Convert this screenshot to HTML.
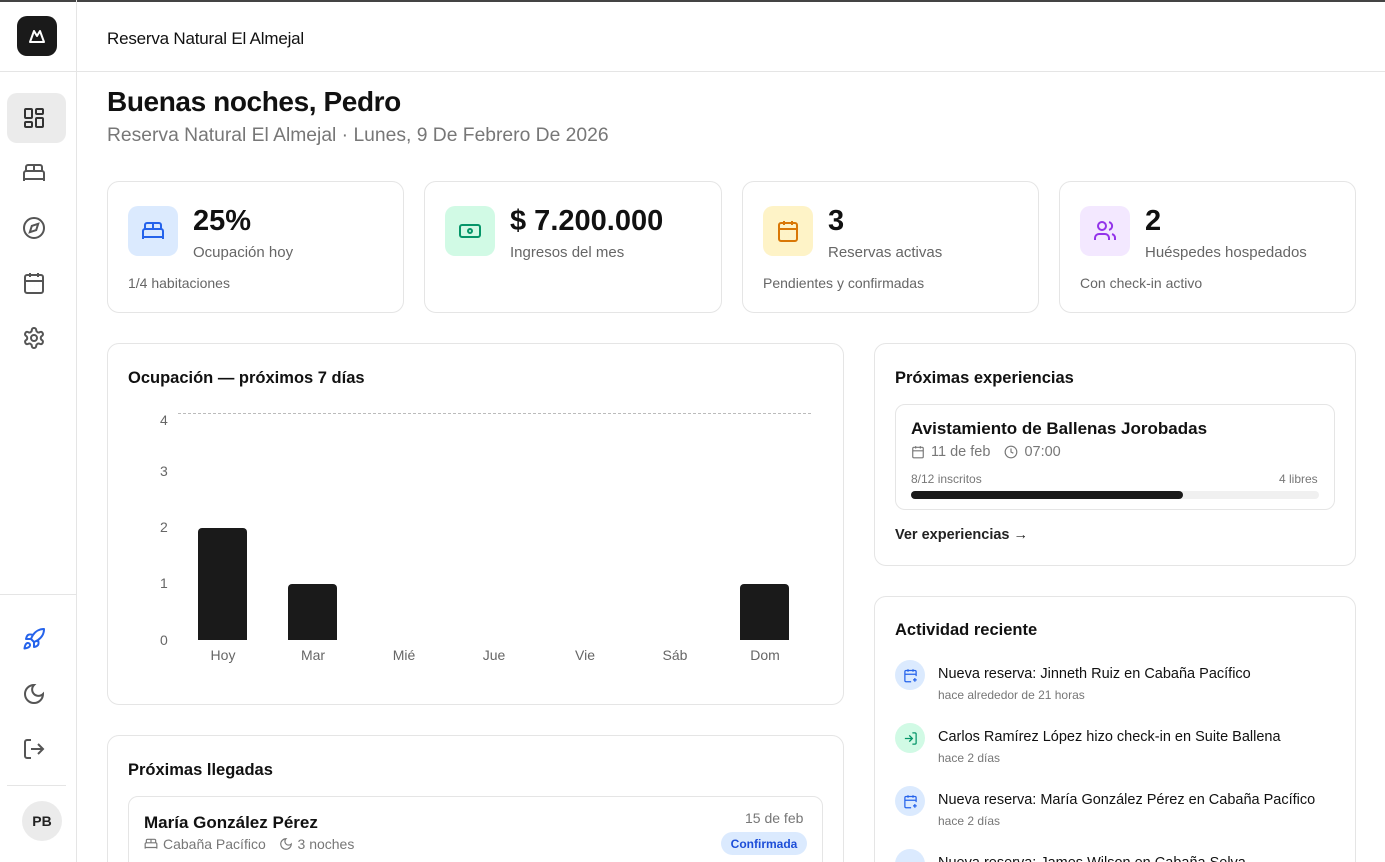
<!DOCTYPE html>
<html><head><meta charset="utf-8"><style>
*{box-sizing:border-box;margin:0;padding:0}
html,body{width:1385px;height:862px;overflow:hidden}
body{background:#fff;font-family:"Liberation Sans",sans-serif;color:#111;position:relative}
.a{position:absolute}
.card{position:absolute;border:1px solid #e5e5e5;border-radius:12px;background:#fff}
.ic{position:absolute;left:128px;top:206px;width:50px;height:50px;border-radius:10px;display:flex;align-items:center;justify-content:center}
.big{font-size:29px;font-weight:bold}
.lbl{font-size:15px;color:#666}
.sub{font-size:14px;color:#666}
svg{display:block}
.si{position:absolute;left:22px}
.bar{position:absolute;background:#1a1a1a;border-radius:4px 4px 0 0;width:49px}
.xl{position:absolute;top:647px;font-size:14px;color:#666;width:60px;text-align:center}
.yl{position:absolute;left:160px;font-size:14px;color:#666}
.act{position:absolute;left:895px;width:30px;height:30px;border-radius:50%;display:flex;align-items:center;justify-content:center}
.at{position:absolute;left:938px;font-size:14.5px;color:#111}
.ad{position:absolute;left:938px;font-size:12px;color:#777}
</style></head><body>
<div class="a" style="left:0;top:0;width:1385px;height:2px;background:#444"></div>
<div class="a" style="left:76px;top:0;width:1px;height:862px;background:#e5e5e5"></div>
<div class="a" style="left:0;top:71px;width:1385px;height:1px;background:#e5e5e5"></div>
<div class="a" style="left:17px;top:16px;width:40px;height:40px;border-radius:10px;background:#1a1a1a;display:flex;align-items:center;justify-content:center">
<svg width="20" height="20" viewBox="0 0 20 20" fill="none" stroke="#fff" stroke-width="2" stroke-linejoin="round"><path d="M3 16 L7 5 L10 10 L13 5 L17 16 Z"/></svg></div>
<div class="a" style="left:107px;top:29px;font-size:17px;font-weight:500;letter-spacing:-0.2px">Reserva Natural El Almejal</div>
<div class="a" style="left:7px;top:93px;width:59px;height:50px;border-radius:10px;background:#ebebeb"></div>
<svg class="si" style="top:106px" width="24" height="24" viewBox="0 0 24 24" fill="none" stroke="#333" stroke-width="2"><rect x="3" y="3" width="7" height="9" rx="1"/><rect x="14" y="3" width="7" height="5" rx="1"/><rect x="14" y="12" width="7" height="9" rx="1"/><rect x="3" y="16" width="7" height="5" rx="1"/></svg>
<svg class="si" style="top:161px" width="24" height="24" viewBox="0 0 24 24" fill="none" stroke="#555" stroke-width="2"><path d="M2 20v-8a2 2 0 0 1 2-2h16a2 2 0 0 1 2 2v8M4 10V6a2 2 0 0 1 2-2h12a2 2 0 0 1 2 2v4M12 4v6M2 18h20"/></svg>
<svg class="si" style="top:216px" width="24" height="24" viewBox="0 0 24 24" fill="none" stroke="#555" stroke-width="2"><circle cx="12" cy="12" r="10"/><path d="M16.2 7.8l-2 6.3-6.4 2.1 2-6.3z"/></svg>
<svg class="si" style="top:271px" width="24" height="24" viewBox="0 0 24 24" fill="none" stroke="#555" stroke-width="2"><rect x="3" y="4" width="18" height="18" rx="2"/><path d="M16 2v4M8 2v4M3 10h18M8 14h.01M12 14h.01M16 14h.01M8 18h.01M12 18h.01M16 18h.01"/></svg>
<svg class="si" style="top:326px" width="24" height="24" viewBox="0 0 24 24" fill="none" stroke="#555" stroke-width="2"><circle cx="12" cy="12" r="3"/><path d="M12.2 2h-.4a2 2 0 0 0-2 2v.2a2 2 0 0 1-1 1.7l-.4.3a2 2 0 0 1-2 0l-.2-.1a2 2 0 0 0-2.7.7l-.2.4a2 2 0 0 0 .7 2.7l.2.1a2 2 0 0 1 1 1.7v.5a2 2 0 0 1-1 1.8l-.2.1a2 2 0 0 0-.7 2.7l.2.4a2 2 0 0 0 2.7.7l.2-.1a2 2 0 0 1 2 0l.4.3a2 2 0 0 1 1 1.7V20a2 2 0 0 0 2 2h.4a2 2 0 0 0 2-2v-.2a2 2 0 0 1 1-1.7l.4-.3a2 2 0 0 1 2 0l.2.1a2 2 0 0 0 2.7-.7l.2-.4a2 2 0 0 0-.7-2.7l-.2-.1a2 2 0 0 1-1-1.8v-.5a2 2 0 0 1 1-1.7l.2-.1a2 2 0 0 0 .7-2.7l-.2-.4a2 2 0 0 0-2.7-.7l-.2.1a2 2 0 0 1-2 0l-.4-.3a2 2 0 0 1-1-1.7V4a2 2 0 0 0-2-2z"/></svg>
<div class="a" style="left:0;top:594px;width:76px;height:1px;background:#e5e5e5"></div>
<svg class="si" style="top:627px" width="24" height="24" viewBox="0 0 24 24" fill="none" stroke="#2563eb" stroke-width="2" stroke-linejoin="round"><path d="M4.5 16.5c-1.5 1.3-2 5-2 5s3.7-.5 5-2c.7-.8.7-2.1-.1-2.9a2.2 2.2 0 0 0-2.9-.1zM12 15l-3-3a22 22 0 0 1 2-4A12.9 12.9 0 0 1 22 2c0 2.7-.8 7.5-6 11a22.4 22.4 0 0 1-4 2zM9 12H4s.6-3 2-4c1.6-1.1 5 0 5 0M12 15v5s3-.6 4-2c1.1-1.6 0-5 0-5"/></svg>
<svg class="si" style="top:682px" width="24" height="24" viewBox="0 0 24 24" fill="none" stroke="#555" stroke-width="2"><path d="M12 3a6 6 0 0 0 9 9 9 9 0 1 1-9-9z"/></svg>
<svg class="si" style="top:737px" width="24" height="24" viewBox="0 0 24 24" fill="none" stroke="#555" stroke-width="2"><path d="M9 21H5a2 2 0 0 1-2-2V5a2 2 0 0 1 2-2h4M16 17l5-5-5-5M21 12H9"/></svg>
<div class="a" style="left:7px;top:785px;width:59px;height:1px;background:#e5e5e5"></div>
<div class="a" style="left:22px;top:801px;width:40px;height:40px;border-radius:50%;background:#ebebeb;font-size:14px;font-weight:bold;display:flex;align-items:center;justify-content:center;color:#222">PB</div>
<div class="a" style="left:107px;top:86px;font-size:28px;font-weight:bold;letter-spacing:-0.4px">Buenas noches, Pedro</div>
<div class="a" style="left:107px;top:125px;font-size:19.3px;color:#777">Reserva Natural El Almejal · Lunes, 9 De Febrero De 2026</div>
<div class="card" style="left:107px;top:181px;width:297px;height:132px"></div>
<div class="card" style="left:424px;top:181px;width:298px;height:132px"></div>
<div class="card" style="left:742px;top:181px;width:297px;height:132px"></div>
<div class="card" style="left:1059px;top:181px;width:297px;height:132px"></div>
<div class="ic" style="background:#dbeafe"><svg width="24" height="24" viewBox="0 0 24 24" fill="none" stroke="#2563eb" stroke-width="2"><path d="M2 20v-8a2 2 0 0 1 2-2h16a2 2 0 0 1 2 2v8M4 10V6a2 2 0 0 1 2-2h12a2 2 0 0 1 2 2v4M12 4v6M2 18h20"/></svg></div>
<div class="ic" style="left:445px;background:#d1fae5"><svg width="24" height="24" viewBox="0 0 24 24" fill="none" stroke="#059669" stroke-width="2"><rect x="2" y="6" width="20" height="12" rx="2"/><circle cx="12" cy="12" r="2"/><path d="M6 12h.01M18 12h.01"/></svg></div>
<div class="ic" style="left:763px;background:#fef3c7"><svg width="24" height="24" viewBox="0 0 24 24" fill="none" stroke="#d97706" stroke-width="2"><rect x="3" y="4" width="18" height="18" rx="2"/><path d="M16 2v4M8 2v4M3 10h18M8 14h.01M12 14h.01M16 14h.01M8 18h.01M12 18h.01M16 18h.01"/></svg></div>
<div class="ic" style="left:1080px;background:#f3e8ff"><svg width="24" height="24" viewBox="0 0 24 24" fill="none" stroke="#9333ea" stroke-width="2"><path d="M16 21v-2a4 4 0 0 0-4-4H6a4 4 0 0 0-4 4v2"/><circle cx="9" cy="7" r="4"/><path d="M22 21v-2a4 4 0 0 0-3-3.9M16 3.1a4 4 0 0 1 0 7.8"/></svg></div>
<div class="a big" style="left:193px;top:205px">25%</div><div class="a lbl" style="left:193px;top:244px">Ocupación hoy</div><div class="a sub" style="left:128px;top:275px">1/4 habitaciones</div>
<div class="a big" style="left:510px;top:205px">$ 7.200.000</div><div class="a lbl" style="left:510px;top:244px">Ingresos del mes</div>
<div class="a big" style="left:828px;top:205px">3</div><div class="a lbl" style="left:828px;top:244px">Reservas activas</div><div class="a sub" style="left:763px;top:275px">Pendientes y confirmadas</div>
<div class="a big" style="left:1145px;top:205px">2</div><div class="a lbl" style="left:1145px;top:244px">Huéspedes hospedados</div><div class="a sub" style="left:1080px;top:275px">Con check-in activo</div>
<div class="card" style="left:107px;top:343px;width:737px;height:362px"></div>
<div class="a" style="left:128px;top:369px;font-size:16.5px;font-weight:bold">Ocupación — próximos 7 días</div>
<div class="a" style="left:178px;top:413px;width:633px;border-top:1.5px dashed #bbb"></div>
<div class="yl" style="top:412px">4</div><div class="yl" style="top:463px">3</div><div class="yl" style="top:519px">2</div><div class="yl" style="top:575px">1</div><div class="yl" style="top:632px">0</div>
<div class="bar" style="left:198px;top:528px;height:112px"></div>
<div class="bar" style="left:288px;top:584px;height:56px"></div>
<div class="bar" style="left:740px;top:584px;height:56px"></div>
<div class="xl" style="left:193px">Hoy</div><div class="xl" style="left:283px">Mar</div><div class="xl" style="left:374px">Mié</div><div class="xl" style="left:464px">Jue</div><div class="xl" style="left:555px">Vie</div><div class="xl" style="left:645px">Sáb</div><div class="xl" style="left:735px">Dom</div>
<div class="card" style="left:107px;top:735px;width:737px;height:160px"></div>
<div class="a" style="left:128px;top:761px;font-size:16.5px;font-weight:bold">Próximas llegadas</div>
<div class="card" style="left:128px;top:796px;width:695px;height:100px;border-radius:10px"></div>
<div class="a" style="left:144px;top:813px;font-size:17px;font-weight:bold">María González Pérez</div>
<div class="a" style="left:144px;top:836px;font-size:14px;color:#777;display:flex;align-items:center;gap:5px"><svg width="14" height="14" viewBox="0 0 24 24" fill="none" stroke="#777" stroke-width="2"><path d="M2 20v-8a2 2 0 0 1 2-2h16a2 2 0 0 1 2 2v8M4 10V6a2 2 0 0 1 2-2h12a2 2 0 0 1 2 2v4M12 4v6M2 18h20"/></svg>Cabaña Pacífico&nbsp;&nbsp;<svg width="14" height="14" viewBox="0 0 24 24" fill="none" stroke="#777" stroke-width="2"><path d="M12 3a6 6 0 0 0 9 9 9 9 0 1 1-9-9z"/></svg>3 noches</div>
<div class="a" style="left:745px;top:810px;font-size:14px;color:#777">15 de feb</div>
<div class="a" style="left:721px;top:832px;width:86px;height:23px;border-radius:12px;background:#dbeafe;color:#1d4ed8;font-size:12px;font-weight:bold;display:flex;align-items:center;justify-content:center">Confirmada</div>
<div class="card" style="left:874px;top:343px;width:482px;height:223px"></div>
<div class="a" style="left:895px;top:369px;font-size:16.5px;font-weight:bold">Próximas experiencias</div>
<div class="card" style="left:895px;top:404px;width:440px;height:106px;border-radius:10px"></div>
<div class="a" style="left:911px;top:419px;font-size:17px;font-weight:bold">Avistamiento de Ballenas Jorobadas</div>
<div class="a" style="left:911px;top:444px;font-size:14.5px;color:#777;display:flex;align-items:center;gap:6px"><svg width="14" height="14" viewBox="0 0 24 24" fill="none" stroke="#777" stroke-width="2"><rect x="3" y="4" width="18" height="18" rx="2"/><path d="M16 2v4M8 2v4M3 10h18"/></svg>11 de feb&nbsp;&nbsp;<svg width="14" height="14" viewBox="0 0 24 24" fill="none" stroke="#777" stroke-width="2"><circle cx="12" cy="12" r="10"/><path d="M12 6v6l4 2"/></svg>07:00</div>
<div class="a" style="left:911px;top:472px;font-size:12px;color:#777">8/12 inscritos</div>
<div class="a" style="left:1279px;top:472px;font-size:12px;color:#777">4 libres</div>
<div class="a" style="left:911px;top:491px;width:408px;height:8px;border-radius:4px;background:#f0f0f0"><div style="width:272px;height:8px;border-radius:4px;background:#1a1a1a"></div></div>
<div class="a" style="left:895px;top:527px;font-size:14.5px;font-weight:bold;color:#222">Ver experiencias →</div>
<div class="card" style="left:874px;top:596px;width:482px;height:300px"></div>
<div class="a" style="left:895px;top:621px;font-size:16.5px;font-weight:bold">Actividad reciente</div>
<div class="act" style="top:660px;background:#dbeafe"><svg width="15" height="15" viewBox="0 0 24 24" fill="none" stroke="#2563eb" stroke-width="2"><path d="M21 13V6a2 2 0 0 0-2-2H5a2 2 0 0 0-2 2v14a2 2 0 0 0 2 2h8M16 2v4M8 2v4M3 10h18M19 16v6M16 19h6"/></svg></div>
<div class="at" style="top:666px">Nueva reserva: Jinneth Ruiz en Cabaña Pacífico</div><div class="ad" style="top:688px">hace alrededor de 21 horas</div>
<div class="act" style="top:723px;background:#d1fae5"><svg width="15" height="15" viewBox="0 0 24 24" fill="none" stroke="#059669" stroke-width="2"><path d="M15 3h4a2 2 0 0 1 2 2v14a2 2 0 0 1-2 2h-4M10 17l5-5-5-5M15 12H3"/></svg></div>
<div class="at" style="top:729px">Carlos Ramírez López hizo check-in en Suite Ballena</div><div class="ad" style="top:751px">hace 2 días</div>
<div class="act" style="top:786px;background:#dbeafe"><svg width="15" height="15" viewBox="0 0 24 24" fill="none" stroke="#2563eb" stroke-width="2"><path d="M21 13V6a2 2 0 0 0-2-2H5a2 2 0 0 0-2 2v14a2 2 0 0 0 2 2h8M16 2v4M8 2v4M3 10h18M19 16v6M16 19h6"/></svg></div>
<div class="at" style="top:792px">Nueva reserva: María González Pérez en Cabaña Pacífico</div><div class="ad" style="top:814px">hace 2 días</div>
<div class="act" style="top:849px;background:#dbeafe"></div>
<div class="at" style="top:855px">Nueva reserva: James Wilson en Cabaña Selva</div>
</body></html>
